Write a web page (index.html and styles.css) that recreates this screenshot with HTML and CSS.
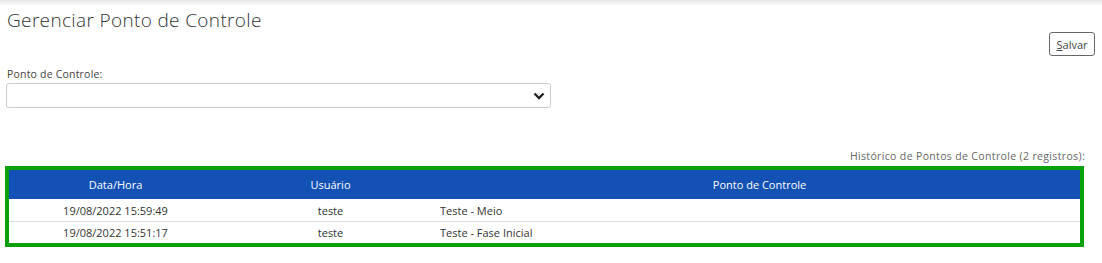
FILE: index.html
```html
<!DOCTYPE html>
<html lang="pt-BR">
<head>
<meta charset="utf-8">
<title>Gerenciar Ponto de Controle</title>
<link rel="stylesheet" href="styles.css">
</head>
<body>
<div class="topbar"></div>
<div class="page">
  <h1 class="title">Gerenciar Ponto de Controle</h1>
  <div class="actions">
    <button class="btn" type="button"><u>S</u>alvar</button>
  </div>
  <div class="field">
    <label class="label">Ponto de Controle:</label>
    <div class="select">
      <svg class="chev" width="12" height="8" viewBox="0 0 12 8"><path d="M1.5 1.5 L6 6 L10.5 1.5" fill="none" stroke="#222" stroke-width="2.4"/></svg>
    </div>
  </div>
  <div class="caption">Histórico de Pontos de Controle (2 registros):</div>
  <div class="frame">
    <table class="grid">
      <thead>
        <tr><th class="c1">Data/Hora</th><th class="c2">Usuário</th><th class="c3">Ponto de Controle</th></tr>
      </thead>
      <tbody>
        <tr><td class="center">19/08/2022 15:59:49</td><td class="center">teste</td><td>Teste - Meio</td></tr>
        <tr><td class="center">19/08/2022 15:51:17</td><td class="center">teste</td><td>Teste - Fase Inicial</td></tr>
      </tbody>
    </table>
  </div>
</div>
</body>
</html>
```

FILE: styles.css
```css
* { box-sizing: border-box; }
html, body { margin: 0; padding: 0; background: #fff; }
body { font-family: "Open Sans", "Liberation Sans", sans-serif; color: #333; }

.topbar {
  height: 5px;
  background: linear-gradient(#e6e6e6, #fafafa);
}

.page { padding: 0 6px 0 6px; }

.title {
  margin: 0;
  padding: 2px 0 0 1px;
  height: 27px;
  font-size: 19px;
  font-weight: 300;
  color: #333;
  letter-spacing: 0.35px;
}

.actions {
  display: flex;
  justify-content: flex-end;
  padding-right: 1px;
}
.btn {
  height: 24px;
  width: 46px;
  padding: 0;
  font-family: inherit;
  font-size: 11px;
  color: #444;
  background: #fff;
  border: 1px solid #666;
  border-radius: 3px;
}

.field { margin-top: 11px; }
.label {
  display: block;
  font-size: 10.5px;
  color: #444;
  padding-left: 1px;
  height: 16px;
  letter-spacing: 0.2px;
}
.select {
  width: 545px;
  height: 25px;
  border: 1px solid #ccc;
  border-radius: 3px;
  display: flex;
  align-items: center;
  justify-content: flex-end;
  padding-right: 5px;
}

.caption {
  margin-top: 41px;
  text-align: right;
  font-size: 10.5px;
  color: #666;
  padding-right: 11px;
  height: 17px;
  letter-spacing: 0.35px;
}

.frame {
  width: 1079px;
  margin-left: -1px;
  border: 4px solid #0aa00a;
}
.grid {
  width: 100%;
  border-collapse: collapse;
  font-size: 11px;
}
.grid th {
  background: #1351b4;
  color: #fff;
  font-weight: 400;
  height: 29px;
  text-align: center;
  padding: 0;
}
.grid .c1 { width: 213px; }
.grid .c2 { width: 217px; }
.grid td {
  height: 22px;
  padding: 0 0 0 1px;
  color: #333;
  border-top: 1px solid #ddd;
}
.grid tbody tr:first-child td { border-top: 1px solid #fff; }
.grid td.center { text-align: center; padding: 0; }
```
